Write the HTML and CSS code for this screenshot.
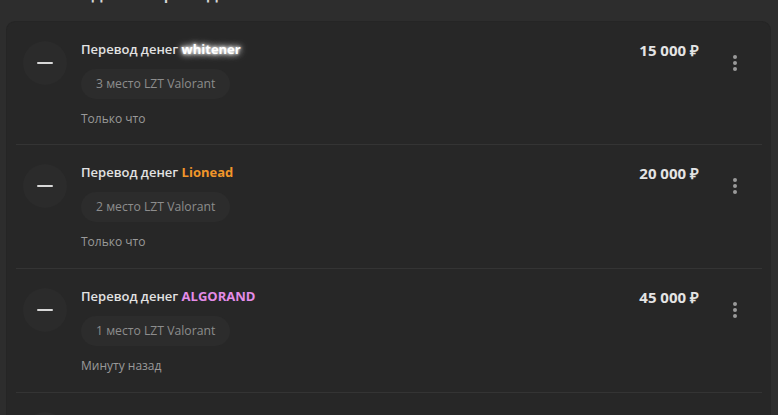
FILE: index.html
```html
<!DOCTYPE html>
<html lang="ru">
<head>
    <meta charset="UTF-8">
    <title>Переводы</title>
    <link rel="stylesheet" href="styles.css">
</head>
<body>
    <h2 class="page-title">Последние переводы</h2>

    <div class="transfers">
        <div class="transfer">
            <div class="avatar"><span class="minus"></span></div>
            <div class="info">
                <div class="title">Перевод денег <span class="user glow">whitener</span></div>
                <div class="tag">3 место LZT Valorant</div>
                <div class="time">Только что</div>
            </div>
            <div class="amount">15 000 ₽</div>
            <button class="menu"><span></span><span></span><span></span></button>
        </div>

        <div class="transfer">
            <div class="avatar"><span class="minus"></span></div>
            <div class="info">
                <div class="title">Перевод денег <span class="user orange">Lionead</span></div>
                <div class="tag">2 место LZT Valorant</div>
                <div class="time">Только что</div>
            </div>
            <div class="amount">20 000 ₽</div>
            <button class="menu"><span></span><span></span><span></span></button>
        </div>

        <div class="transfer">
            <div class="avatar"><span class="minus"></span></div>
            <div class="info">
                <div class="title">Перевод денег <span class="user pink">ALGORAND</span></div>
                <div class="tag">1 место LZT Valorant</div>
                <div class="time">Минуту назад</div>
            </div>
            <div class="amount">45 000 ₽</div>
            <button class="menu"><span></span><span></span><span></span></button>
        </div>

        <div class="transfer next">
            <div class="avatar"><span class="minus"></span></div>
        </div>
    </div>
</body>
</html>
```

FILE: styles.css
```css
* {
    box-sizing: border-box;
}

html, body {
    overflow: hidden;
}

body {
    margin: 0;
    padding: 0 8px 0 7px;
    background: #2d2d2d;
    font-family: "Open Sans", sans-serif;
    color: #e0e0e0;
}

.page-title {
    margin: -20px 0 0 30px;
    height: 42px;
    font-size: 18px;
    font-weight: 600;
    line-height: 24px;
    color: #d6d6d6;
}

.transfers {
    background: #272727;
    border-radius: 8px;
    padding: 0 8px 0 9px;
    box-shadow: 0 0 0 1px #252525;
}

.transfer {
    display: flex;
    align-items: flex-start;
    padding: 17px 0 18px 7px;
    border-bottom: 1px solid #343434;
}

.transfer:first-child {
    padding-bottom: 17px;
}

.transfer.next {
    border-bottom: 0;
}

.avatar {
    width: 44px;
    height: 44px;
    flex-shrink: 0;
    border-radius: 50%;
    background: #2b2b2b;
    margin-top: 2px;
    display: flex;
    align-items: center;
    justify-content: center;
}

.minus {
    width: 16px;
    height: 2px;
    background: #d8d8d8;
    border-radius: 1px;
}

.info {
    flex: 1;
    margin-left: 14px;
}

.title {
    font-size: 13px;
    font-weight: 600;
    line-height: 20px;
    color: #e2e2e2;
}

.user {
    font-weight: 700;
}

.glow {
    color: #fff;
    text-shadow: 0 0 3px #fff, 0 0 6px #fff, 0 0 9px rgba(255, 255, 255, 0.7);
}

.orange {
    color: #f0962a;
}

.pink {
    color: #e48ce8;
}

.tag {
    display: inline-block;
    margin-top: 10px;
    padding: 0 15px;
    height: 30px;
    line-height: 30px;
    border-radius: 15px;
    background: #2c2c2c;
    font-size: 12.2px;
    color: #8d8d8d;
}

.time {
    margin-top: 11px;
    font-size: 12px;
    line-height: 17px;
    color: #9a9a9a;
}

.amount {
    font-size: 15px;
    font-weight: 700;
    line-height: 22px;
    color: #e4e4e4;
    white-space: nowrap;
}

.menu {
    width: 32px;
    height: 32px;
    margin: 8px 11px 0 20px;
    padding: 0;
    border: 0;
    border-radius: 50%;
    background: transparent;
    display: flex;
    flex-direction: column;
    align-items: center;
    justify-content: center;
    gap: 2px;
    cursor: pointer;
}

.menu span {
    width: 4px;
    height: 4px;
    border-radius: 50%;
    background: #9a9a9a;
}
```
